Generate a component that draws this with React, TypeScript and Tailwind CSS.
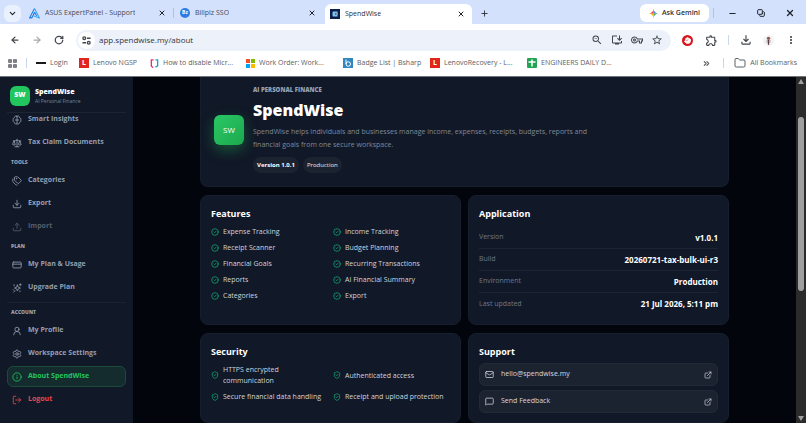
import type { ComponentType, ReactNode } from 'react';
import {
  ArrowLeft,
  ArrowRight,
  ChevronDown,
  ChevronsRight,
  CircleCheck,
  Copy,
  CreditCard,
  Download,
  ExternalLink,
  Folder,
  Hand,
  Info,
  LogOut,
  Mail,
  MessageSquare,
  Minus,
  Plus,
  RotateCw,
  Scale,
  Settings,
  ShieldCheck,
  Tags,
  Upload,
  UserRound,
  X,
} from 'lucide-react';
import {
  MdInstallDesktop,
  MdMoreVert,
  MdOutlineExtension,
  MdOutlineFileDownload,
  MdOutlineVpnKey,
  MdRefresh,
  MdStarOutline,
  MdZoomOut,
} from 'react-icons/md';

type IconType = ComponentType<{ size?: number | string; className?: string; strokeWidth?: number | string }>;

interface NavItem {
  label: string;
  icon: IconType;
  tone?: 'muted' | 'active' | 'danger';
}

const insightItems: NavItem[] = [
  { label: 'Smart Insights', icon: InsightIcon },
  { label: 'Tax Claim Documents', icon: Scale },
];

const toolItems: NavItem[] = [
  { label: 'Categories', icon: Tags },
  { label: 'Export', icon: Download },
  { label: 'Import', icon: Upload, tone: 'muted' },
];

const planItems: NavItem[] = [
  { label: 'My Plan & Usage', icon: CreditCard },
  { label: 'Upgrade Plan', icon: UpgradeIcon },
];

const accountItems: NavItem[] = [
  { label: 'My Profile', icon: UserRound },
  { label: 'Workspace Settings', icon: Settings },
  { label: 'About SpendWise', icon: Info, tone: 'active' },
  { label: 'Logout', icon: LogOut, tone: 'danger' },
];

const features = [
  'Expense Tracking',
  'Income Tracking',
  'Receipt Scanner',
  'Budget Planning',
  'Financial Goals',
  'Recurring Transactions',
  'Reports',
  'AI Financial Summary',
  'Categories',
  'Export',
];

const security = [
  'HTTPS encrypted communication',
  'Authenticated access',
  'Secure financial data handling',
  'Receipt and upload protection',
];

const appInfo = [
  ['Version', 'v1.0.1'],
  ['Build', '20260721-tax-bulk-ui-r3'],
  ['Environment', 'Production'],
  ['Last updated', '21 Jul 2026, 5:11 pm'],
];

const itemTones = {
  default: 'border-transparent text-[#949eb0]',
  muted: 'border-transparent text-[#555e6e]',
  active: 'border-[#1c4a3a] bg-[#142c2e] text-[#22c55e]',
  danger: 'border-transparent text-[#e5484d]',
};

export default function App() {
  return (
    <div className="flex h-screen flex-col overflow-hidden bg-[#03050c] font-['Open_Sans',sans-serif] text-[7px]">
      <TabStrip />
      <Toolbar />
      <BookmarksBar />
      <div className="flex min-h-0 flex-1">
        <Sidebar />
        <AboutPage />
        <Scrollbar />
      </div>
    </div>
  );
}

/* Browser chrome */

function TabStrip() {
  return (
    <div className="flex h-6 shrink-0 items-center bg-[#d3e1fd] pt-0.5 text-[#474c55]">
      <button aria-label="Search tabs" className="ml-1 flex h-[17px] w-[17px] shrink-0 items-center justify-center rounded-md bg-[#e9f0fe] text-[#1f2329]">
        <ChevronDown size={9} strokeWidth={3} />
      </button>
      <Tab title="ASUS ExpertPanel - Support" className="ml-2 w-[144px]">
        <svg viewBox="0 0 20 20" className="h-[11px] w-[11px]" fill="none">
          <path d="M10 1 1 18h4l5-10 4 6" stroke="#1d7be8" strokeWidth="2" strokeLinejoin="round" />
          <path d="M10 1l9 17-11-4" stroke="#39a3f4" strokeWidth="2" strokeLinejoin="round" />
        </svg>
      </Tab>
      <div className="h-2.5 w-px bg-[#a9c2ee]" />
      <Tab title="Billplz SSO" className="ml-1.5 w-[143px]">
        <span className="flex h-2.5 w-2.5 items-center justify-center rounded-full bg-[#2f7ae5] text-[5px] font-bold text-white">Bz</span>
      </Tab>
      <Tab title="SpendWise" className="ml-0.5 h-5 w-[147px] self-end rounded-t-md bg-white pl-[5px] text-[#2c3036]">
        <svg viewBox="0 0 20 20" className="h-2.5 w-2.5">
          <rect width="20" height="20" fill="#0b1f4b" />
          <path d="M15 5H7a2 2 0 0 0-2 2v6a2 2 0 0 0 2 2h8v-3h-4V8h4z" fill="#7cc4ee" />
          <rect x="12" y="9" width="4" height="2" fill="#fff" />
        </svg>
      </Tab>
      <button aria-label="New tab" className="ml-2 text-[#30343b]">
        <Plus size={9} strokeWidth={2.5} />
      </button>
      <button className="ml-auto flex h-[18px] w-[69px] items-center justify-center gap-1 rounded-md bg-white font-semibold text-[#2c3036]">
        <svg viewBox="0 0 20 20" className="h-[9px] w-[9px] shrink-0">
          <path d="M10 0c.8 5.800 4.200 9.200 10 10H10z" fill="#4285f4" />
          <path d="M20 10c-5.800.8-9.200 4.200-10 10V10z" fill="#34a853" />
          <path d="M10 20C9.200 14.200 5.800 10.800 0 10h10z" fill="#fbbc04" />
          <path d="M0 10C5.800 9.200 9.200 5.800 10 0v10z" fill="#ea4335" />
        </svg>
        Ask Gemini
      </button>
      <div className="ml-1 h-2.5 w-px bg-[#a9c2ee]" />
      <div className="flex w-[92px] shrink-0 items-center justify-between pl-3.5 pr-[11px] text-[#1f2329]">
        <button aria-label="Minimize"><Minus size={9} strokeWidth={3} /></button>
        <button aria-label="Restore"><Copy size={8} strokeWidth={3} className="-scale-x-100 rotate-90" /></button>
        <button aria-label="Close"><X size={10} strokeWidth={3} /></button>
      </div>
    </div>
  );
}

function Tab({ title, className, children }: { title: string; className: string; children: ReactNode }) {
  return (
    <div className={`flex shrink-0 items-center gap-[5px] pr-[7px] ${className}`}>
      {children}
      <span className="truncate">{title}</span>
      <button aria-label={`Close ${title}`} className="ml-auto text-[#1f2329]">
        <X size={8} strokeWidth={3} />
      </button>
    </div>
  );
}

function Toolbar() {
  return (
    <div className="flex h-8 shrink-0 items-center bg-white pl-2.5 pr-[9px] text-[#42464d]">
      <button aria-label="Back"><ArrowLeft size={10} strokeWidth={3} /></button>
      <button aria-label="Forward" className="ml-3 text-[#a5a8ad]"><ArrowRight size={10} strokeWidth={3} /></button>
      <button aria-label="Reload" className="ml-3"><RotateCw size={10} strokeWidth={3} /></button>
      <div className="ml-3 flex h-[21px] min-w-0 flex-1 items-center gap-2 rounded-full bg-[#ecf1fa] pl-0.5 pr-2">
        <span className="flex h-[17px] w-[17px] shrink-0 items-center justify-center rounded-full bg-white">
          <svg viewBox="0 0 20 20" className="h-[9px] w-[9px]" fill="none" stroke="currentColor" strokeWidth="3">
            <circle cx="5" cy="5" r="3" />
            <path d="M11 5h8M1 15h8" />
            <circle cx="15" cy="15" r="3" />
          </svg>
        </span>
        <input
          aria-label="Address"
          defaultValue="app.spendwise.my/about"
          className="-ml-1 min-w-0 flex-1 bg-transparent text-[8px] text-[#33373d] outline-none"
        />
        <MdZoomOut size={12} />
        <MdInstallDesktop size={12} />
        <MdOutlineVpnKey size={12} />
        <MdStarOutline size={12} />
      </div>
      <span className="ml-[11px] flex h-[11px] w-[11px] items-center justify-center rounded-full bg-[#d9161d] text-white">
        <Hand size={7} strokeWidth={3} fill="currentColor" />
      </span>
      <MdOutlineExtension size={13} className="ml-3" />
      <div className="ml-2.5 h-2.5 w-px bg-[#c9d6ee]" />
      <MdOutlineFileDownload size={14} className="ml-2.5" />
      <svg viewBox="0 0 20 20" className="ml-2.5 h-[11px] w-[11px]">
        <rect width="20" height="20" rx="10" fill="#f4f2f3" />
        <circle cx="10" cy="6" r="3" fill="#8a5a52" />
        <path d="M6 9h8l-1 6H7z" fill="#c2b0b2" />
        <path d="M9 9h2v9H9z" fill="#5b3e44" />
      </svg>
      <MdMoreVert size={12} className="ml-[11px]" />
    </div>
  );
}

function BookmarksBar() {
  return (
    <div className="flex h-[21px] shrink-0 items-center border-b border-[#6e757d] bg-white pb-1.5 pl-2 pr-[9px] text-[#5a5e65]">
      <svg viewBox="0 0 20 20" className="h-[9px] w-[9px]" fill="none" stroke="currentColor" strokeWidth="3">
        <path d="M2 2h5v5H2zM13 2h5v5h-5zM2 13h5v5H2zM13 13h5v5h-5z" />
      </svg>
      <div className="mx-[9px] h-2.5 w-px bg-[#c9d6ee]" />
      <Bookmark label="Login" className="w-[43px]">
        <span className="block h-0.5 w-2.5 bg-[#1a1a1a]" />
      </Bookmark>
      <Bookmark label="Lenovo NGSP" className="w-[71px]">
        <LenovoMark />
      </Bookmark>
      <Bookmark label="How to disable Micr..." className="w-[96px]">
        <svg viewBox="0 0 20 20" className="h-[9px] w-[9px]" fill="none" strokeWidth="3">
          <path d="M8 2H3v14l4 3" stroke="#e5316f" />
          <path d="M12 2h5v13l-5 3" stroke="#2b9ad6" />
        </svg>
      </Bookmark>
      <Bookmark label="Work Order: Work..." className="w-[97px]">
        <span className="grid grid-cols-2 gap-px">
          <i className="h-1 w-1 bg-[#f25022]" />
          <i className="h-1 w-1 bg-[#7fba00]" />
          <i className="h-1 w-1 bg-[#00a4ef]" />
          <i className="h-1 w-1 bg-[#ffb900]" />
        </span>
      </Bookmark>
      <Bookmark label="Badge List | Bsharp" className="w-[87px]">
        <svg viewBox="0 0 20 20" className="h-2.5 w-2.5" fill="none" stroke="#fff" strokeWidth="2">
          <rect width="20" height="20" fill="#2f86c1" stroke="none" />
          <path d="M6 3v9" />
          <circle cx="10.500" cy="12" r="4.500" />
        </svg>
      </Bookmark>
      <Bookmark label="LenovoRecovery - L..." className="w-[97px]">
        <LenovoMark />
      </Bookmark>
      <Bookmark label="ENGINEERS DAILY D..." className="w-[96px]">
        <svg viewBox="0 0 20 20" className="h-2.5 w-2.5" stroke="#fff" strokeWidth="3">
          <rect width="20" height="20" rx="2" fill="#23a455" stroke="none" />
          <path d="M3 8h14M10 3v14" />
        </svg>
      </Bookmark>
      <ChevronsRight size={9} strokeWidth={3} className="ml-auto mr-3 shrink-0" />
      <div className="mr-2.5 h-2.5 w-px bg-[#c9d6ee]" />
      <a href="#bookmarks" className="flex shrink-0 items-center gap-1">
        <Folder size={12} strokeWidth={2} />
        All Bookmarks
      </a>
    </div>
  );
}

function Bookmark({ label, className, children }: { label: string; className: string; children: ReactNode }) {
  return (
    <a href="#bookmark" className={`flex shrink-0 items-center gap-1 whitespace-nowrap ${className}`}>
      <span className="shrink-0">{children}</span>
      {label}
    </a>
  );
}

function LenovoMark() {
  return <span className="flex h-2.5 w-2.5 items-center justify-center bg-[#e1251b] font-bold text-white">L</span>;
}

/* SpendWise app */

function InsightIcon({ size = 10 }: { size?: number | string }) {
  return (
    <svg width={size} height={size} viewBox="0 0 24 24" fill="none" stroke="currentColor" strokeWidth="2" strokeLinecap="round">
      <path d="M12 3C9 1 6 3 6 6c-3 1-4 4-3 6-1 3 0 5 3 6 0 3 3 5 6 3 3 2 6 0 6-3 3-1 4-3 3-6 1-2 0-5-3-6 0-3-3-5-6-3z" />
      <path d="M12 3v18M8 12h8" />
    </svg>
  );
}

function UpgradeIcon({ size = 10 }: { size?: number | string }) {
  return (
    <svg width={size} height={size} viewBox="0 0 24 24" fill="none" stroke="currentColor" strokeWidth="2" strokeLinecap="round" strokeLinejoin="round">
      <path d="M13 5l2 5 5 2-5 2-2 5-2-5-5-2 5-2z" />
      <path d="M20 2v4M18 4h4M5 4v3M3 16l2 2M4 22l3-3M19 19v2" />
    </svg>
  );
}

function Sidebar() {
  return (
    <aside className="flex w-[133px] shrink-0 flex-col overflow-hidden bg-[#111827] px-[7px]">
      <div className="z-10 flex h-9 shrink-0 items-center gap-[5px] border-b border-[#1d2533] bg-[#111827] pl-[3px] pt-0.5">
        <span className="flex h-5 w-5 items-center justify-center rounded-md bg-[#22c55e] font-extrabold text-white">SW</span>
        <div>
          <p className="text-[7px] font-extrabold leading-[11px] text-white">SpendWise</p>
          <p className="text-[5px] leading-[9px] text-[#7d8798]">AI Personal Finance</p>
        </div>
      </div>
      <nav className="-mt-1">
        <NavGroup items={insightItems} />
        <NavLabel>TOOLS</NavLabel>
        <NavGroup items={toolItems} />
        <NavLabel>PLAN</NavLabel>
        <NavGroup items={planItems} />
        <div className="mt-1 border-t border-[#1a2230]">
          <NavLabel>ACCOUNT</NavLabel>
          <NavGroup items={accountItems} />
        </div>
      </nav>
    </aside>
  );
}

function NavLabel({ children }: { children: string }) {
  return <p className="flex h-[17px] items-center pl-1 pt-0.5 text-[5px] font-extrabold text-[#9aa3b2]">{children}</p>;
}

function NavGroup({ items }: { items: NavItem[] }) {
  return (
    <ul className="flex flex-col gap-0.5">
      {items.map(({ label, icon: Icon, tone = 'default' }) => (
        <li key={label}>
          <a
            href="#nav"
            className={`flex h-[21px] w-[119px] items-center gap-1.5 rounded-md border pl-1 font-bold ${itemTones[tone]}`}
          >
            <Icon size={10} strokeWidth={2} />
            {label}
          </a>
        </li>
      ))}
    </ul>
  );
}

function AboutPage() {
  return (
    <main className="min-w-0 flex-1 overflow-hidden">
      <div className="mx-auto max-w-[529px]">
        {/* Hero */}
        <section className="mb-2 flex h-[110px] items-center gap-[9px] rounded-b-lg border border-t-0 border-[#171f2e] bg-[#111827] pb-1 pl-[13px]">
          <div className="flex h-[30px] w-[30px] shrink-0 items-center justify-center rounded-md bg-gradient-to-br from-[#2bc764] to-[#1ba94e] text-[8px] text-white shadow-[0_5px_14px_rgba(34,197,94,0.35)]">
            SW
          </div>
          <div>
            <p className="text-[6px] font-extrabold leading-[9px] text-[#98a2b3]">AI PERSONAL FINANCE</p>
            <h1 className="my-1 text-[16px] font-extrabold leading-[22px] text-white">SpendWise</h1>
            <p className="max-w-[352px] text-[7px] leading-[13px] text-[#7f899b]">
              SpendWise helps individuals and businesses manage income, expenses, receipts, budgets, reports and
              financial goals from one secure workspace.
            </p>
            <div className="mt-1.5 flex gap-1 text-[6px] text-[#e5e7eb]">
              <span className="flex h-4 items-center rounded-full bg-[#1c2330] px-1 font-bold text-white">Version 1.0.1</span>
              <span className="flex h-4 items-center rounded-full bg-[#1c2330] px-1">Production</span>
            </div>
          </div>
        </section>

        <div className="grid grid-cols-2 gap-x-[7px] gap-y-2">
          <Card title="Features" className="h-[130px]">
            <CheckList items={features} icon={CircleCheck} />
          </Card>

          <Card title="Application" className="h-[130px]">
            <dl className="divide-y divide-[#1d2533] pt-0.5">
              {appInfo.map(([name, value]) => (
                <div key={name} className="flex h-[22px] items-center justify-between">
                  <dt className="text-[#6f798b]">{name}</dt>
                  <dd className="text-[8px] font-bold text-white">{value}</dd>
                </div>
              ))}
            </dl>
          </Card>

          <Card title="Security" className="h-[90px]">
            <CheckList items={security} icon={ShieldCheck} />
          </Card>

          <Card title="Support" className="h-[90px]">
            <div className="flex flex-col gap-1">
              <SupportLink icon={Mail} label="hello@spendwise.my" />
              <SupportLink icon={MessageSquare} label="Send Feedback" />
            </div>
          </Card>
        </div>
      </div>
    </main>
  );
}

function Card({ title, className, children }: { title: string; className: string; children: ReactNode }) {
  return (
    <section className={`rounded-lg border border-[#171f2e] bg-[#111827] px-2.5 pt-[11px] ${className}`}>
      <h2 className="mb-1 text-[9px] font-bold leading-[14px] text-white">{title}</h2>
      {children}
    </section>
  );
}

function CheckList({ items, icon: Icon }: { items: string[]; icon: IconType }) {
  return (
    <ul className="grid grid-cols-2 gap-x-[5px] gap-y-[5px] pt-px">
      {items.map((item) => (
        <li key={item} className="flex items-center gap-1 leading-[11px] text-[#cfd5de]">
          <Icon size={8} strokeWidth={2} className="shrink-0 text-[#10b981]" />
          {item}
        </li>
      ))}
    </ul>
  );
}

function SupportLink({ icon: Icon, label }: { icon: IconType; label: string }) {
  return (
    <a href="#support" className="flex h-[23px] items-center gap-[7px] rounded-md border border-[#232a37] bg-[#1b2230] px-[5px] text-[#d5dae2]">
      <Icon size={9} strokeWidth={2} />
      {label}
      <ExternalLink size={8} strokeWidth={2} className="ml-auto" />
    </a>
  );
}

function Scrollbar() {
  return (
    <div className="flex w-2.5 shrink-0 flex-col items-center bg-[#2b2b2b] py-0.5">
      <span className="border-x-[3px] border-b-[5px] border-x-transparent border-b-[#9f9f9f]" />
      <div className="mb-auto mt-[33px] h-[51%] w-1.5 rounded-full bg-[#9f9f9f]" />
      <span className="border-x-[3px] border-t-[5px] border-x-transparent border-t-[#9f9f9f]" />
    </div>
  );
}
